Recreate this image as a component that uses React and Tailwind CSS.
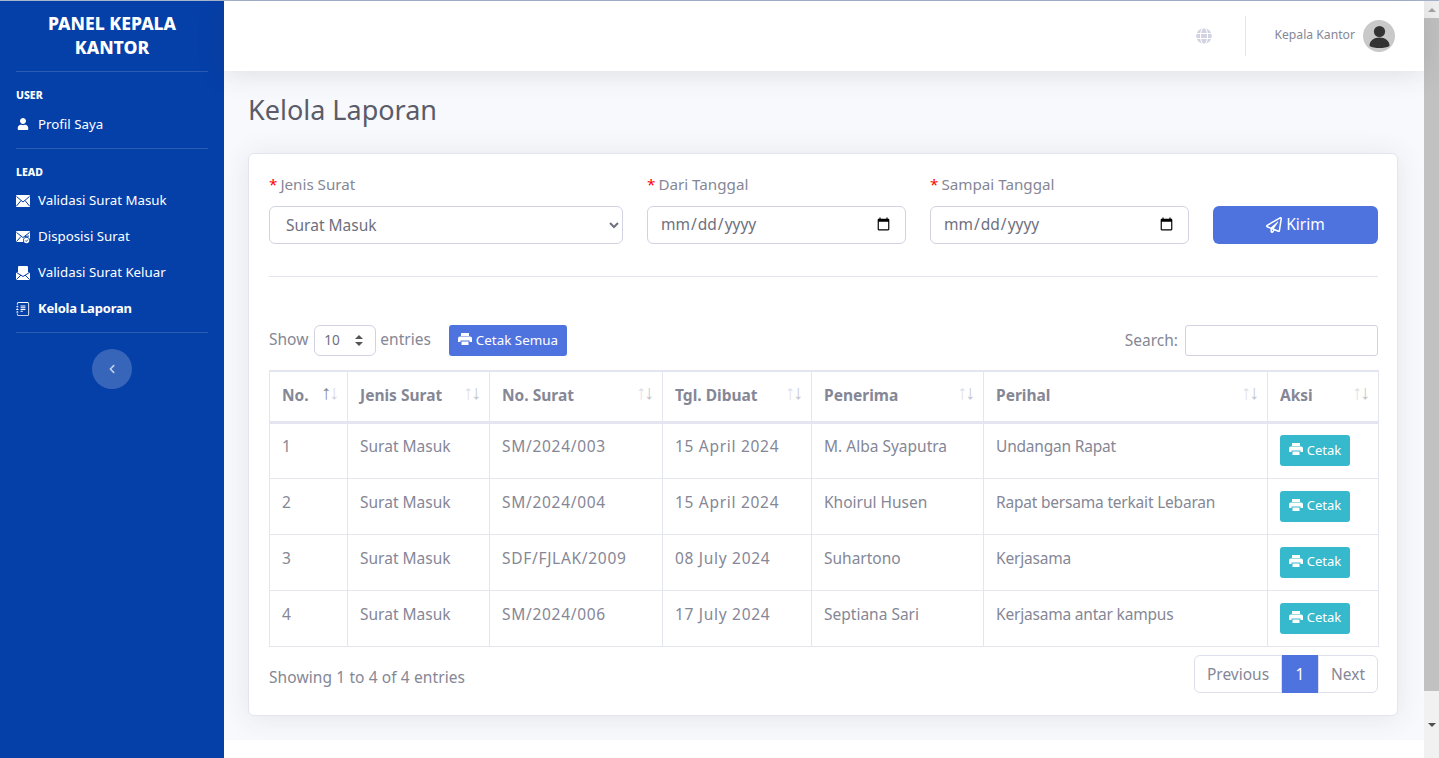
import React from "react";
import { FaUser, FaGlobe, FaRegPaperPlane, FaChevronLeft } from "react-icons/fa";
import { BsJournalText } from "react-icons/bs";

const rows = [
  { no: 1, jenis: "Surat Masuk", nomor: "SM/2024/003", tgl: "15 April 2024", penerima: "M. Alba Syaputra", perihal: "Undangan Rapat" },
  { no: 2, jenis: "Surat Masuk", nomor: "SM/2024/004", tgl: "15 April 2024", penerima: "Khoirul Husen", perihal: "Rapat bersama terkait Lebaran" },
  { no: 3, jenis: "Surat Masuk", nomor: "SDF/FJLAK/2009", tgl: "08 July 2024", penerima: "Suhartono", perihal: "Kerjasama" },
  { no: 4, jenis: "Surat Masuk", nomor: "SM/2024/006", tgl: "17 July 2024", penerima: "Septiana Sari", perihal: "Kerjasama antar kampus" },
];

const columns = [
  { label: "No.", width: "w-[78px]", active: true },
  { label: "Jenis Surat", width: "w-[142px]" },
  { label: "No. Surat", width: "w-[173px]" },
  { label: "Tgl. Dibuat", width: "w-[149px]" },
  { label: "Penerima", width: "w-[172px]" },
  { label: "Perihal", width: "w-[284px]" },
  { label: "Aksi", width: "w-[111px]" },
];

// ikon amplop sidebar, garisnya warna sidebar
function MailIcon() {
  return (
    <svg viewBox="0 0 14 12" className="w-[14px] h-3">
      <rect width="14" height="12" rx="1" fill="#fff" />
      <path d="M.5 1.5 7 7l6.500-5.500M.5 11 5 5.500M13.500 11 9 5.500" fill="none" stroke="#053fa8" strokeWidth="1" />
    </svg>
  );
}

function MailCheckIcon() {
  return (
    <svg viewBox="0 0 14 13" className="w-[14px] h-[13px]">
      <rect width="14" height="11" rx="1" fill="#fff" />
      <path d="M.5 1.500 7 6.500l6.500-5M.5 10.500 5 5.500M13 5 9 5.500" fill="none" stroke="#053fa8" strokeWidth="1" />
      <circle cx="10.500" cy="9.500" r="3.500" fill="#053fa8" />
      <circle cx="10.500" cy="9.500" r="2.700" fill="#fff" />
      <path d="M9.200 9.500l1 1 1.700-1.900" fill="none" stroke="#053fa8" strokeWidth=".9" />
    </svg>
  );
}

function MailOpenIcon() {
  return (
    <svg viewBox="0 0 14 14" className="w-[14px] h-[14px]">
      <path d="M3 0h8a1 1 0 0 1 1 1v5l2 1v6a1 1 0 0 1-1 1H1a1 1 0 0 1-1-1V7l2-1V1a1 1 0 0 1 1-1z" fill="#fff" />
      <path d="M.5 6.500 7 10.500l6.500-4M.5 13.500 5 9M13.500 13.500 9 9" fill="none" stroke="#053fa8" strokeWidth="1" />
    </svg>
  );
}

function PrintIcon() {
  return (
    <svg viewBox="0 0 14 12" className="w-[14px] h-3 -mt-[3px] shrink-0" fill="currentColor">
      <path d="M3 0h8v3H3z" />
      <path d="M2 3.500h10a2 2 0 0 1 2 2V9h-2.500V7.500h-9V9H0V5.500a2 2 0 0 1 2-2z" />
      <path d="M3.500 8.500h7V12h-7z" />
    </svg>
  );
}

function NavItem({ icon, label, bold }) {
  return (
    <a className={`flex items-center h-9 px-4 text-white ${bold ? "text-[13px] font-bold tracking-[-0.2px]" : "text-[13.3px]"}`}>
      <span className="w-[22px] flex items-center text-[14px]">{icon}</span>
      {label}
    </a>
  );
}

function SortHeader({ label, active, width }) {
  return (
    <th className={`${width} relative h-[51px] px-3 pb-[2px] text-left font-bold border border-[#e3e6f0] border-t-2 border-b-[3px]`}>
      {label}
      <span className="absolute right-[8px] top-[10px] text-[20px] leading-5 font-normal">
        <span className={active ? "text-[#858796]" : "text-[#dfe0e6]"}>↑</span>
        <span className={`-ml-[2px] ${active ? "text-[#d5d6dd]" : "text-[#c4c6d0]"}`}>↓</span>
      </span>
    </th>
  );
}

function FieldLabel({ children }) {
  return (
    <label className="block h-[21px] mb-[11px] text-[15.2px] leading-[21px]">
      <span className="text-[#ff0000] mr-[3px]">*</span>
      {children}
    </label>
  );
}

export default function App() {
  return (
    <div className="h-screen overflow-hidden flex flex-col bg-white text-[#858796] text-[15.5px] font-['Noto_Sans',sans-serif]">
      <div className="h-px shrink-0 bg-[#a7b4cd]" />
      <div className="flex flex-1 min-h-0">
        {/* sidebar */}
        <aside className="w-[224px] shrink-0 bg-[#053fa8] text-white">
          <div className="h-[70px] pt-[10px] text-center text-[17.6px] leading-6 font-extrabold text-white">
            PANEL KEPALA<br />KANTOR
          </div>
          <div className="mx-4 border-t border-white/15" />
          <div className="px-4 pt-[15px] text-[10.5px] leading-4 font-extrabold">USER</div>
          <div className="mt-1">
            <NavItem icon={<FaUser className="text-[12px] ml-[1px] -mt-[2px]" />} label="Profil Saya" />
          </div>
          <div className="mx-4 mt-[5px] border-t border-white/15" />
          <div className="px-4 pt-[15px] text-[10.5px] leading-4 font-extrabold">LEAD</div>
          <div className="mt-[3px]">
            <NavItem icon={<MailIcon />} label="Validasi Surat Masuk" />
            <NavItem icon={<MailCheckIcon />} label="Disposisi Surat" />
            <NavItem icon={<MailOpenIcon />} label="Validasi Surat Keluar" />
            <NavItem icon={<BsJournalText />} label="Kelola Laporan" bold />
          </div>
          <div className="mx-4 mt-[5px] border-t border-white/15" />
          <div className="flex justify-center mt-4">
            <button className="w-10 h-10 rounded-full bg-white/20 flex items-center justify-center text-white/70">
              <FaChevronLeft className="text-[10px]" />
            </button>
          </div>
        </aside>

        {/* content */}
        <div className="flex-1 min-w-0 flex flex-col bg-white">
          <div className="flex-1 bg-[#f8f9fc]">
            <header className="relative h-[70px] bg-white shadow-[0_2px_28px_0_rgba(58,59,69,0.15)] flex items-center justify-end pr-[29px]">
              <FaGlobe className="text-[16px] text-[#d1d3e2]" />
              <div className="w-px h-10 bg-[#e3e6f0] ml-[33px] mr-7" />
              <span className="text-[12.2px] text-[#858796] mr-2 mb-[2px]">Kepala Kantor</span>
              <div className="w-8 h-8 rounded-full bg-[#c9c9c9] flex items-center justify-center overflow-hidden">
                <svg viewBox="0 0 32 32" className="w-8 h-8" fill="#333">
                  <circle cx="16.500" cy="11.500" r="5.600" />
                  <path d="M6.500 26c0-5.500 4.500-8.500 10-8.500s10 3 10 8.500c-2.500 1.600-6 2-10 2s-7.500-.4-10-2z" />
                </svg>
              </div>
            </header>

            <main className="pl-6 pr-[26px] pt-5">
              <h1 className="h-[38px] text-[27px] leading-[38px] text-[#5a5c69]">Kelola Laporan</h1>

              <section className="mt-6 h-[563px] bg-white rounded-md border border-[#e3e6f0] shadow-[0_2px_28px_0_rgba(58,59,69,0.1)] pl-5 pr-[19px] pt-5">
                <form className="flex gap-6 h-[71px]">
                  <div className="w-[354px]">
                    <FieldLabel>Jenis Surat</FieldLabel>
                    <select className="w-full h-[38px] pl-3 pr-1 rounded-md border border-[#d1d3e2] bg-white text-[#6e707e]">
                      <option>Surat Masuk</option>
                    </select>
                  </div>
                  <div className="w-[259px]">
                    <FieldLabel>Dari Tanggal</FieldLabel>
                    <input type="date" className="w-full h-[38px] px-3 rounded-md border border-[#d1d3e2] bg-white text-[#6e707e]" />
                  </div>
                  <div className="w-[259px]">
                    <FieldLabel>Sampai Tanggal</FieldLabel>
                    <input type="date" className="w-full h-[38px] px-3 rounded-md border border-[#d1d3e2] bg-white text-[#6e707e]" />
                  </div>
                  <div className="flex-1 pt-[32px]">
                    <button type="button" className="w-full h-[38px] rounded-md bg-[#4e73df] text-white flex items-center justify-center gap-1">
                      <FaRegPaperPlane className="text-[16px]" />
                      Kirim
                    </button>
                  </div>
                </form>

                <hr className="mt-[31px] border-[#e3e6f0]" />

                <div className="mt-12 flex items-center justify-between h-[31px]">
                  <div className="flex items-center">
                    <span className="-mt-[2px]">Show</span>
                    <div className="relative ml-[6px] mr-1">
                      <select className="appearance-none block w-[62px] h-[31px] pl-[9px] rounded-md border border-[#d1d3e2] bg-white text-[13.6px] text-[#6e707e]">
                        <option>10</option>
                      </select>
                      <svg viewBox="0 0 8 11" className="absolute right-[13px] top-[10px] w-2 h-[11px] pointer-events-none" fill="#555">
                        <path d="M4 0l4 4H0zM4 11l4-4H0z" />
                      </svg>
                    </div>
                    <span className="-mt-[2px]">entries</span>
                    <button type="button" className="ml-[18px] h-[31px] px-[9px] rounded-[3px] bg-[#4e73df] text-white text-[13.4px] flex items-center gap-1">
                      <PrintIcon />
                      Cetak Semua
                    </button>
                  </div>
                  <label className="flex items-center">
                    Search:
                    <input className="ml-[7px] w-[193px] h-[31px] rounded-[3px] border border-[#d1d3e2] bg-white" />
                  </label>
                </div>

                <table className="mt-[14px] w-[1109px] table-fixed border-collapse">
                  <thead>
                    <tr>
                      {columns.map((c) => (
                        <SortHeader key={c.label} label={c.label} active={c.active} width={c.width} />
                      ))}
                    </tr>
                  </thead>
                  <tbody>
                    {rows.map((r) => (
                      <tr key={r.no} className="h-14">
                        <td className="px-3 pb-[7px] border border-[#e3e6f0]">{r.no}</td>
                        <td className="px-3 pb-[7px] border border-[#e3e6f0]">{r.jenis}</td>
                        <td className="px-3 pb-[7px] border border-[#e3e6f0] tracking-[0.7px]">{r.nomor}</td>
                        <td className="px-3 pb-[7px] border border-[#e3e6f0] tracking-[0.7px]">{r.tgl}</td>
                        <td className="px-3 pb-[7px] border border-[#e3e6f0]">{r.penerima}</td>
                        <td className="px-3 pb-[7px] border border-[#e3e6f0] tracking-[-0.2px]">{r.perihal}</td>
                        <td className="px-3 border border-[#e3e6f0]">
                          <button type="button" className="h-[31px] w-[70px] rounded-[3px] bg-[#36b9cc] text-white text-[13px] flex items-center justify-center gap-1">
                            <PrintIcon />
                            Cetak
                          </button>
                        </td>
                      </tr>
                    ))}
                  </tbody>
                </table>

                <div className="mt-2 flex items-start justify-between">
                  <div className="pt-[10px] leading-6 tracking-[0.1px]">Showing 1 to 4 of 4 entries</div>
                  <nav className="flex h-[38px] leading-[36px]">
                    <a className="w-[88px] text-center rounded-l-md border border-[#dddfeb] bg-white">Previous</a>
                    <a className="w-9 text-center bg-[#4e73df] text-white leading-[38px]">1</a>
                    <a className="w-[60px] text-center rounded-r-md border border-[#dddfeb] bg-white">Next</a>
                  </nav>
                </div>
              </section>
            </main>
          </div>
          <footer className="h-[18px] shrink-0 bg-white" />
        </div>

        {/* page scrollbar as it shows in the picture */}
        <div className="w-[15px] shrink-0 bg-[#f1f1f1] flex flex-col">
          <div className="h-[17px] flex items-center justify-center">
            <div className="w-0 h-0 border-x-[4px] border-x-transparent border-b-[4px] border-b-[#a3a3a3]" />
          </div>
          <div className="h-[673px] bg-[#c1c1c1]" />
          <div className="flex-1 flex items-center justify-center">
            <div className="w-0 h-0 border-x-[4px] border-x-transparent border-t-[4px] border-t-[#505050]" />
          </div>
        </div>
      </div>
    </div>
  );
}
